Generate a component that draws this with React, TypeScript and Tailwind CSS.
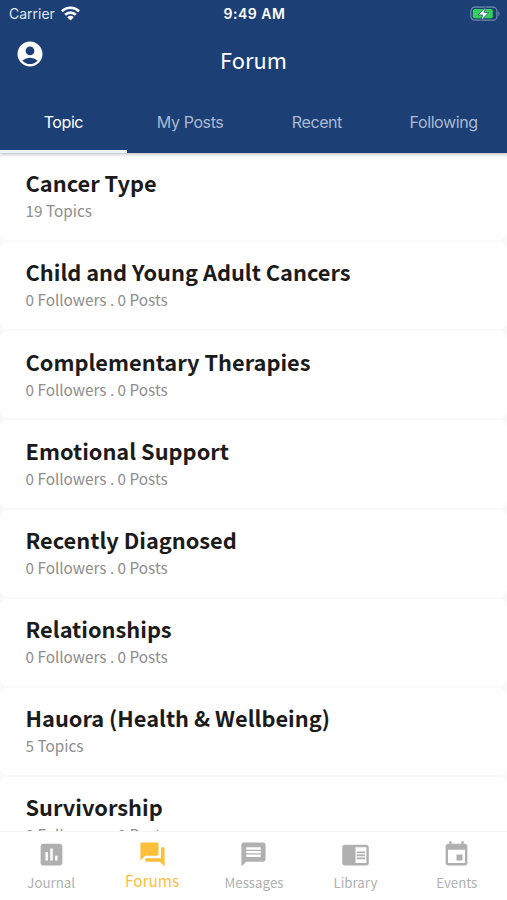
import { IconType } from "react-icons";
import {
  MdAccountCircle,
  MdChromeReaderMode,
  MdEvent,
  MdForum,
  MdInsertChart,
  MdMessage,
} from "react-icons/md";

type TTopic = {
  title: string;
  info: string;
};

type TNavItem = {
  label: string;
  icon: IconType;
  active?: boolean;
};

const tabs = ["Topic", "My Posts", "Recent", "Following"];

const topics: TTopic[] = [
  { title: "Cancer Type", info: "19 Topics" },
  { title: "Child and Young Adult Cancers", info: "0 Followers . 0 Posts" },
  { title: "Complementary Therapies", info: "0 Followers . 0 Posts" },
  { title: "Emotional Support", info: "0 Followers . 0 Posts" },
  { title: "Recently Diagnosed", info: "0 Followers . 0 Posts" },
  { title: "Relationships", info: "0 Followers . 0 Posts" },
  { title: "Hauora (Health & Wellbeing)", info: "5 Topics" },
  { title: "Survivorship", info: "0 Followers . 0 Posts" },
];

const navItems: TNavItem[] = [
  { label: "Journal", icon: MdInsertChart },
  { label: "Forums", icon: MdForum, active: true },
  { label: "Messages", icon: MdMessage },
  { label: "Library", icon: MdChromeReaderMode },
  { label: "Events", icon: MdEvent },
];

function WifiIcon() {
  return (
    <svg width="19" height="15" viewBox="0 0 18 14" fill="none" stroke="#fff" strokeWidth="2.5">
      <path d="M.9 4.9a11.6 11.6 0 0 1 16.2 0" />
      <path d="M3.9 8.2a7.3 7.3 0 0 1 10.2 0" />
      <path d="M9 13.6 5.9 10.5a4.4 4.4 0 0 1 6.2 0z" fill="#fff" stroke="none" />
    </svg>
  );
}

function BatteryIcon() {
  return (
    <svg width="31" height="16" viewBox="0 0 31 16" fill="none">
      <rect x=".9" y="1.2" width="26" height="13" rx="3.8" stroke="#7189ac" strokeWidth="1.2" />
      <path d="M28.4 5.4c1.6.5 1.6 4.1 0 4.6z" fill="#7189ac" />
      <rect x="2.8" y="3.1" width="20" height="9.2" rx="2" fill="#33d158" />
      <path
        d="M15.6 1.2 8.2 8.9h4.4l-1.5 5.6 7.5-7.9h-4.5z"
        fill="#fff"
        stroke="#1c4076"
        strokeWidth=".7"
      />
    </svg>
  );
}

export default function App() {
  return (
    <div className="flex flex-col h-[900px] w-[507px] overflow-hidden bg-[#f9f9f9] font-['Noto_Sans_CJK_SC',sans-serif]">
      <header className="shrink-0 h-[153px] flex flex-col bg-[#1c4076] text-white relative z-10 shadow-[0_1px_4px_rgba(0,0,0,0.3)]">
        <div className="grid grid-cols-3 items-center h-[27px] pl-[9px] pr-[7px] font-['Inter',sans-serif] text-[14px]">
          <div className="flex items-center gap-[6px]">
            <span className="text-[#dfe6f0]">Carrier</span>
            <WifiIcon />
          </div>
          <span className="text-center font-semibold tracking-[0.5px] whitespace-nowrap">9:49 AM</span>
          <div className="flex justify-end -mr-[1px]">
            <BatteryIcon />
          </div>
        </div>

        <div className="grid grid-cols-3 h-[65px] px-4">
          <MdAccountCircle className="size-[30px] mt-[12px] -ml-[1px]" />
          <h1 className="text-center text-[21.8px] leading-[66px]">Forum</h1>
        </div>

        <nav className="grid grid-cols-4 flex-1 font-['Inter',sans-serif] text-base tracking-[-0.4px]">
          {tabs.map((tab, i) => (
            <button
              key={tab}
              className={
                i === 0
                  ? "pt-[1px] border-b-3 border-[#eef3fa] text-white"
                  : "pt-[1px] border-b-3 border-transparent text-[#a9bad2]"
              }
            >
              {tab}
            </button>
          ))}
        </nav>
      </header>

      <main className="flex-1 min-h-0 overflow-hidden">
        {topics.map((topic) => (
          <div key={topic.title} className="h-[87.15px] mb-[2px] pl-[25.5px] pt-[12.3px] rounded-lg bg-white">
            <h2 className="text-[21.8px] leading-9 font-bold text-[#1b1b1b]">{topic.title}</h2>
            <p className="text-[15.3px] leading-[18px] text-[#8e8e8e]">{topic.info}</p>
          </div>
        ))}
      </main>

      <footer className="grid grid-cols-5 shrink-0 h-[69px] border-t border-[#f4f4f4] bg-white text-[#b0b0b0]">
        {navItems.map(({ label, icon: Icon, active }) => (
          <div
            key={label}
            className={
              active
                ? "flex flex-col items-center pt-[8px] text-[15.3px] text-[#fcbf3a]"
                : "flex flex-col items-center pt-[8px] pl-[1px] text-[13.3px]"
            }
          >
            <Icon className="size-[29px]" />
            <span className={active ? "leading-[23px]" : "leading-[28px]"}>{label}</span>
          </div>
        ))}
      </footer>
    </div>
  );
}
